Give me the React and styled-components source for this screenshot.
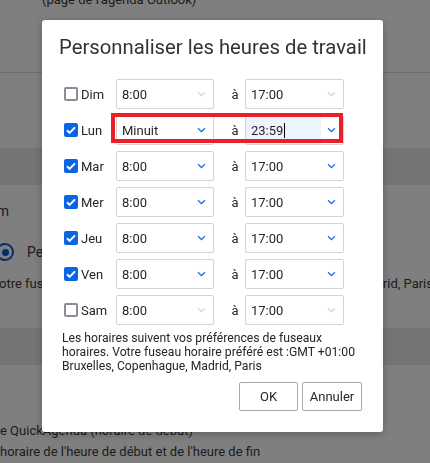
import React from 'react';
import styled, { createGlobalStyle } from 'styled-components';

const GlobalStyle = createGlobalStyle`
  html, body {
    margin: 0;
    padding: 0;
    width: 430px;
    height: 463px;
    overflow: hidden;
    font-family: Roboto, "Liberation Sans", Arial, sans-serif;
  }
`;

const days = [
  { label: 'Dim', on: false, from: '8:00', to: '17:00' },
  { label: 'Lun', on: true, from: 'Minuit', to: '23:59', focus: true },
  { label: 'Mar', on: true, from: '8:00', to: '17:00' },
  { label: 'Mer', on: true, from: '8:00', to: '17:00' },
  { label: 'Jeu', on: true, from: '8:00', to: '17:00' },
  { label: 'Ven', on: true, from: '8:00', to: '17:00' },
  { label: 'Sam', on: false, from: '8:00', to: '17:00' },
];

const Chevron = ({ disabled }) => (
  <svg width="9" height="6" viewBox="0 0 9 6">
    <path
      d="M1 1.2l3.5 3.3 3.5-3.3"
      fill="none"
      stroke={disabled ? '#cbd7ee' : '#2f6fd8'}
      strokeWidth="1.3"
    />
  </svg>
);

const CheckBox = ({ on }) =>
  on ? (
    <Box $on>
      <svg width="14" height="14" viewBox="0 0 14 14">
        <path d="M3 7.3l2.6 2.6L11 4.4" fill="none" stroke="#fff" strokeWidth="2" />
      </svg>
    </Box>
  ) : (
    <Box />
  );

export default function App() {
  return (
    <>
      <GlobalStyle />
      <Page>
        <TopText>(page de l'agenda Outlook)</TopText>
        <Section $h={62} />
        <Divider />
        <Section $h={75} />
        <Band />
        <Section $h={143}>
          <LeftCut $top={18}>Format de l'heure du système m</LeftCut>
          <RadioRow>
            <Radio />
            <span>Personnaliser</span>
          </RadioRow>
          <SplitLine>
            <span>otre fuseau</span>
            <span>drid, Paris</span>
          </SplitLine>
        </Section>
        <Band />
        <Section $h={100}>
          <BgLine $top={58}>e QuickAgenda (horaire de début)</BgLine>
          <BgLine $top={5}>horaire de l'heure de début et de l'heure de fin</BgLine>
        </Section>
      </Page>

      <Overlay>
        <Modal>
          <Title>Personnaliser les heures de travail</Title>
          <Rows>
            {days.map((d) => (
              <Row key={d.label}>
                <Day>
                  <CheckBox on={d.on} />
                  <span>{d.label}</span>
                </Day>
                <Select>
                  <span>{d.from}</span>
                  <Chevron disabled={!d.on} />
                </Select>
                <To>à</To>
                <Select $focus={d.focus}>
                  <Value $focus={d.focus}>
                    {d.to}
                    {d.focus && <Caret />}
                  </Value>
                  <ChevronCell $focus={d.focus}>
                    <Chevron disabled={!d.on} />
                  </ChevronCell>
                </Select>
                {d.focus && <Highlight />}
              </Row>
            ))}
          </Rows>
          <Note>
            Les horaires suivent vos préférences de fuseaux horaires. Votre fuseau horaire préféré
            est :GMT +01:00 Bruxelles, Copenhague, Madrid, Paris
          </Note>
          <Buttons>
            <Button $w={59}>OK</Button>
            <Button $w={60}>Annuler</Button>
          </Buttons>
        </Modal>
      </Overlay>
    </>
  );
}

// background page

const Page = styled.div`
  width: 430px;
  height: 463px;
  background: #fff;
  color: #3a3a3a;
  font-size: 13px;
  overflow: hidden;
  white-space: nowrap;
`;

const TopText = styled.div`
  height: 10px;
  line-height: 10px;
  margin-top: -5px;
  padding-left: 42px;
  padding-bottom: 5px;
`;

const Section = styled.div`
  height: ${(p) => p.$h}px;
  overflow: hidden;
`;

const Divider = styled.div`
  height: 1px;
  background: #dcdcdc;
`;

const Band = styled.div`
  height: 37px;
  background: #e9e9e9;
`;

const BgLine = styled.div`
  margin-top: ${(p) => p.$top}px;
  line-height: 16px;
`;

const LeftCut = styled.div`
  margin-top: ${(p) => p.$top}px;
  width: 9px;
  display: flex;
  justify-content: flex-end;
  overflow: hidden;
  line-height: 16px;
  font-size: 14px;
`;

const RadioRow = styled.div`
  display: flex;
  align-items: center;
  gap: 13px;
  margin-top: 24px;
  margin-left: -4px;
  font-size: 14px;
`;

const Radio = styled.span`
  width: 14px;
  height: 14px;
  border-radius: 50%;
  border: 2px solid #0f5bd6;
  display: grid;
  place-items: center;
  &::after {
    content: '';
    width: 7px;
    height: 7px;
    border-radius: 50%;
    background: #0f5bd6;
  }
`;

const SplitLine = styled.div`
  display: flex;
  justify-content: space-between;
  margin: 15px -3px 0 -1px;
  line-height: 16px;
`;

// dialog

const Overlay = styled.div`
  position: fixed;
  inset: 0;
  background: rgba(0, 0, 0, 0.5);
`;

const Modal = styled.div`
  margin: 20px 0 0 42px;
  width: 341px;
  height: 412px;
  box-sizing: border-box;
  background: #fff;
  border-radius: 3px;
  box-shadow: 0 2px 8px rgba(0, 0, 0, 0.25);
  padding: 15px 21px 0 20px;
  color: #262626;
`;

const Title = styled.h2`
  margin: 0 -20px 0 -3px;
  font-weight: 400;
  font-size: 20.3px;
  line-height: 25px;
  color: #333;
  white-space: nowrap;
`;

const Rows = styled.div`
  margin-top: 19px;
  display: flex;
  flex-direction: column;
  gap: 6px;
`;

const Row = styled.div`
  position: relative;
  display: grid;
  grid-template-columns: 54px 98px 31px 99px;
  height: 30px;
  align-items: stretch;
`;

const Day = styled.label`
  display: flex;
  align-items: center;
  gap: 3px;
  padding-left: 2px;
  font-size: 13px;
  color: #262626;
`;

const Box = styled.span`
  width: 14px;
  height: 14px;
  box-sizing: border-box;
  border-radius: 2px;
  background: ${(p) => (p.$on ? '#0b63e5' : '#fff')};
  border: ${(p) => (p.$on ? 'none' : '2px solid #8e8b99')};
  display: flex;
`;

const Select = styled.div`
  display: flex;
  align-items: center;
  justify-content: space-between;
  box-sizing: border-box;
  border: 1px solid #d4d4d4;
  border-radius: 2px;
  padding: 0 ${(p) => (p.$focus ? '0' : '7px')} 0 ${(p) => (p.$focus ? '0' : '5px')};
  font-size: 13px;
  color: #262626;
`;

const Value = styled.span`
  flex: 1;
  align-self: stretch;
  display: flex;
  align-items: center;
  padding-left: ${(p) => (p.$focus ? '5px' : '0')};
  background: ${(p) => (p.$focus ? '#edf4fe' : 'transparent')};
`;

const ChevronCell = styled.span`
  display: flex;
  align-items: center;
  padding: 0 ${(p) => (p.$focus ? '7px' : '0')} 0 6px;
`;

const Caret = styled.span`
  width: 1px;
  height: 15px;
  background: #000;
  margin-left: 1px;
`;

const To = styled.span`
  display: flex;
  align-items: center;
  justify-content: center;
  padding-left: 11px;
  font-size: 13px;
  color: #262626;
`;

const Highlight = styled.div`
  position: absolute;
  top: -2px;
  left: 49px;
  width: 232px;
  height: 30px;
  box-sizing: border-box;
  border: 4px solid #e8202a;
  pointer-events: none;
`;

const Note = styled.p`
  margin: 6px -6px 0 0;
  font-size: 12.2px;
  line-height: 14px;
  color: #262626;
`;

const Buttons = styled.div`
  display: flex;
  justify-content: flex-end;
  gap: 4px;
  margin-top: 9px;
`;

const Button = styled.button`
  width: ${(p) => p.$w}px;
  height: 29px;
  background: #fff;
  border: 1px solid #a8a8a8;
  border-radius: 2px;
  font-family: Roboto, "Liberation Sans", Arial, sans-serif;
  font-size: 13px;
  color: #262626;
  padding: 0;
`;
